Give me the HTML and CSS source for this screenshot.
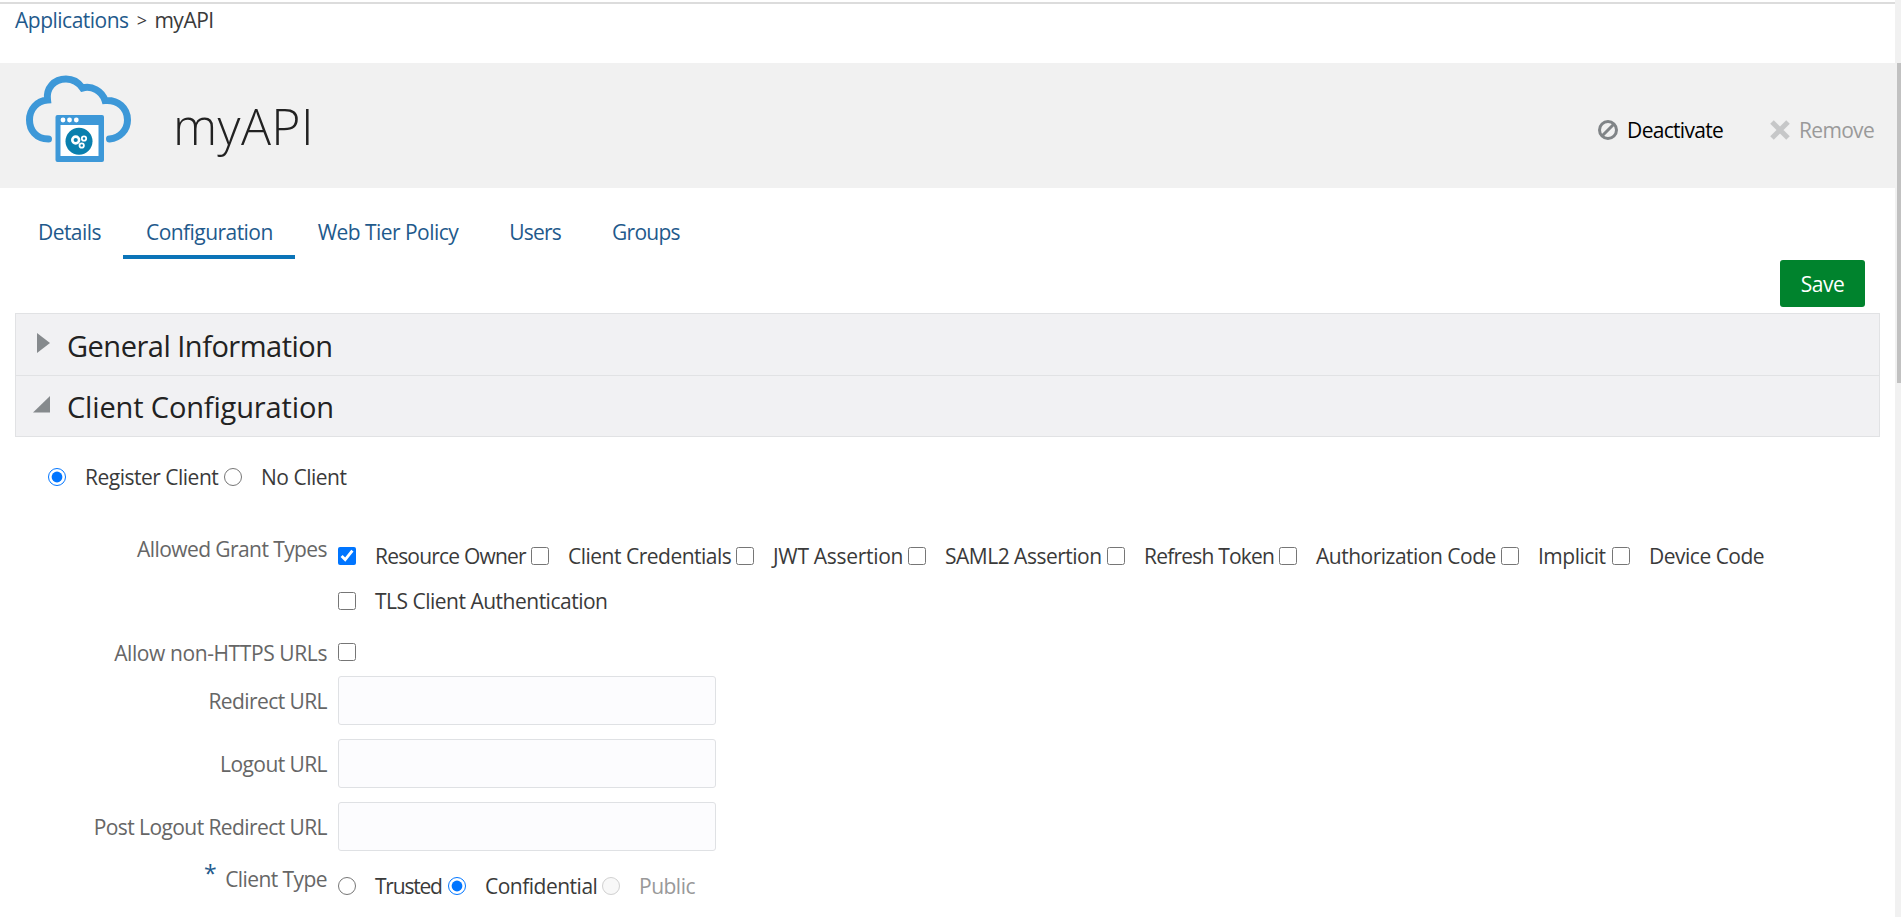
FILE: index.html
```html
<!DOCTYPE html>
<html lang="en">
<head>
<meta charset="utf-8">
<title>myAPI</title>
<link rel="stylesheet" href="styles.css">
</head>
<body>
<div class="page">
  <div class="content">
    <nav class="breadcrumb"><a href="#">Applications</a><span class="sep">&gt;</span><span>myAPI</span></nav>

    <header class="app-header">
      <svg class="app-icon" viewBox="20 63 120 110" width="120" height="110">
        <path d="M48.500 139C36 139 29.500 130 29.500 120C29.500 109 37 101 47.500 100C46 88 54 79 66 79C73 79 79 83 82.500 88C92 85.500 102 91 105 100.500C118 99.500 127.500 108 127.500 120C127.500 130 120 138 109.500 139" fill="none" stroke="#3d98d8" stroke-width="7" stroke-linecap="round"/>
        <rect x="55.500" y="115" width="48.500" height="47" rx="2" fill="#3d98d8"/>
        <rect x="60.500" y="125" width="38" height="31" fill="#fff"/>
        <circle cx="63" cy="120" r="2.400" fill="#fff"/>
        <circle cx="69.500" cy="120" r="2.400" fill="#fff"/>
        <circle cx="76.300" cy="120" r="2.400" fill="#fff"/>
        <circle cx="79" cy="141.300" r="13.500" fill="#0a7fae"/>
        <g fill="none" stroke="#fff">
          <circle cx="75.700" cy="140" r="3.400" stroke-width="2.600"/>
          <circle cx="84" cy="138.500" r="2.200" stroke-width="1.800"/>
          <circle cx="81.700" cy="145.500" r="2.200" stroke-width="1.800"/>
        </g>
      </svg>
      <h1 class="app-title">myAPI</h1>
      <div class="actions">
        <a class="action" href="#">
          <svg width="20" height="20" viewBox="0 0 20 20"><circle cx="10" cy="10" r="8.500" fill="none" stroke="#808487" stroke-width="3"/><path d="M4.500 15.500L15.500 4.500" stroke="#808487" stroke-width="3"/></svg>
          <span>Deactivate</span>
        </a>
        <a class="action disabled" href="#">
          <svg width="20" height="20" viewBox="0 0 20 20"><path d="M2 2L18 18M18 2L2 18" stroke="#c6c7c8" stroke-width="5"/></svg>
          <span>Remove</span>
        </a>
      </div>
    </header>

    <div class="tabs">
      <a class="tab" href="#">Details</a>
      <a class="tab active" href="#">Configuration</a>
      <a class="tab" href="#">Web Tier Policy</a>
      <a class="tab spaced" href="#">Users</a>
      <a class="tab spaced" href="#">Groups</a>
    </div>

    <div class="toolbar"><button class="save">Save</button></div>

    <div class="accordion">
      <h2 class="section"><svg class="arrow" width="20" height="20" viewBox="0 0 20 20"><path d="M6 0L19 10L6 20Z" fill="#868a8d"/></svg>General Information</h2>
      <h2 class="section expanded"><svg class="arrow" width="20" height="20" viewBox="0 0 20 20"><path d="M19 2V18.500H2Z" fill="#868a8d"/></svg>Client Configuration</h2>
    </div>

    <div class="client-mode">
      <label class="option"><input type="radio" name="mode" checked><span>Register Client</span></label>
      <label class="option"><input type="radio" name="mode"><span>No Client</span></label>
    </div>

    <form class="form">
      <div class="row grants-row">
        <span class="label">Allowed Grant Types</span>
        <div class="grants">
          <label class="option snug"><input type="checkbox" checked><span>Resource Owner</span></label>
          <label class="option"><input type="checkbox"><span>Client Credentials</span></label>
          <label class="option loose"><input type="checkbox"><span>JWT Assertion</span></label>
          <label class="option"><input type="checkbox"><span>SAML2 Assertion</span></label>
          <label class="option snug"><input type="checkbox"><span>Refresh Token</span></label>
          <label class="option"><input type="checkbox"><span>Authorization Code</span></label>
          <label class="option"><input type="checkbox"><span>Implicit</span></label>
          <label class="option"><input type="checkbox"><span>Device Code</span></label>
          <label class="option"><input type="checkbox"><span>TLS Client Authentication</span></label>
        </div>
      </div>
      <div class="row https-row">
        <label class="label https-label" for="https">Allow non-HTTPS URLs</label>
        <div class="option"><input type="checkbox" id="https"></div>
      </div>
      <div class="row url-row"><label class="label" for="redirect">Redirect URL</label><input class="text" id="redirect" type="text"></div>
      <div class="row url-row"><label class="label" for="logout">Logout URL</label><input class="text" id="logout" type="text"></div>
      <div class="row url-row"><label class="label" for="post">Post Logout Redirect URL</label><input class="text" id="post" type="text"></div>
      <div class="row type-row">
        <span class="label"><span class="required">*</span>Client Type</span>
        <div class="types">
          <label class="option tight"><input type="radio" name="type"><span>Trusted</span></label>
          <label class="option"><input type="radio" name="type" checked><span>Confidential</span></label>
          <label class="option off"><input type="radio" name="type" disabled><span>Public</span></label>
        </div>
      </div>
    </form>
  </div>
  <div class="scrollbar"><div class="thumb"></div></div>
</div>
</body>
</html>
```
FILE: styles.css
```css
* { box-sizing: border-box; }
body {
  margin: 0;
  height: 917px;
  overflow: hidden;
  background: #fff;
  color: #3a3a3a;
  font: 21px/28px "Open Sans", "Noto Sans", sans-serif;
  letter-spacing: -0.5px;
}
a { color: #1f5a8c; text-decoration: none; }
.page { display: flex; height: 917px; }
.content { flex: 1; border-top: 2px solid #fff; min-width: 0; }
.breadcrumb {
  display: flex;
  height: 61px;
  padding: 2px 0 0 15px;
  border-top: 2px solid #dcdcdc;
  white-space: nowrap;
}
.sep { margin: 0 8px; font-size: 18px; }

.app-header {
  display: flex;
  align-items: center;
  height: 125px;
  padding: 0 21px 0 20px;
  background: #f1f1f1;
}
.app-icon { flex: none; margin-top: -15px; }
.app-title {
  margin: 0 0 0 33px;
  color: #222;
  font-size: 50px;
  font-weight: 300;
  line-height: 66px;
  letter-spacing: 0.4px;
}
.actions { display: flex; margin: 9px 0 0 auto; }
.action { display: flex; align-items: center; color: #000; letter-spacing: -0.7px; }
.action svg { margin-right: 9px; }
.action + .action { margin-left: 47px; }
.action.disabled { color: #9a9a9a; }

.tabs { display: flex; height: 71px; padding: 25px 0 0 15px; letter-spacing: -0.55px; }
.tab { height: 46px; padding: 5px 22px 0 23px; white-space: nowrap; }
.tab.active { border-bottom: 4px solid #0b74b8; }
.tab.spaced { padding-left: 29px; letter-spacing: -0.75px; }

.toolbar { display: flex; justify-content: flex-end; height: 54px; padding: 1px 30px 0 0; }
.save {
  width: 85px;
  height: 47px;
  padding: 0;
  border: 0;
  border-radius: 3px;
  background: #00832d;
  color: #fff;
  font: inherit;
  letter-spacing: -0.5px;
}

.accordion { margin: 0 15px; border: 1px solid #e1e2e4; background: #f1f1f3; }
.section {
  display: flex;
  align-items: center;
  height: 61px;
  margin: 0;
  padding: 2px 0 0 15px;
  color: #222;
  font-size: 29px;
  font-weight: 400;
  letter-spacing: -0.5px;
}
.section.expanded { border-top: 1px solid #e1e2e4; letter-spacing: -0.15px; }
.arrow { margin: -6px 16px 0 0; }

.client-mode {
  display: grid;
  grid-template-columns: 176px auto;
  justify-content: start;
  height: 98px;
  margin-left: 48px;
  padding-top: 26px;
}
.option { display: flex; align-items: center; height: 28px; white-space: nowrap; }
.option input { flex: none; width: 18px; height: 18px; margin: 0 19px 0 0; }
.option.off { color: #999; }

.row { display: flex; }
.label { flex: none; width: 327px; margin-right: 11px; color: #666; letter-spacing: -0.58px; text-align: right; white-space: nowrap; }
.https-label { letter-spacing: -0.4px; }
.snug { letter-spacing: -0.8px; }
.loose { letter-spacing: -0.3px; }
.tight { letter-spacing: -1.2px; }
.grants-row { height: 103px; }
.grants {
  display: grid;
  grid-template-columns: 193px 205px 172px 199px 172px 222px 111px 170px;
  grid-auto-rows: 28px;
  row-gap: 17px;
  padding-top: 7px;
}
.https-row { height: 38px; }
.https-label { padding-top: 1px; }
.url-row { align-items: center; height: 49px; margin-bottom: 14px; }
.url-row .label { padding-top: 1px; }
.text { width: 378px; height: 49px; border: 1px solid #dfe1e4; border-radius: 3px; background: #fcfcfe; }
.required { display: inline-block; margin-right: 9px; color: #1f5a8c; font-size: 23px; line-height: 20px; transform: translateY(-5px); }
.types { display: grid; grid-template-columns: 110px 154px auto; padding-top: 7px; }

.scrollbar { flex: none; width: 6px; padding: 63px 0 0 2px; background: #f1f1f1; }
.thumb { height: 320px; background: #c1c1c1; }
```
